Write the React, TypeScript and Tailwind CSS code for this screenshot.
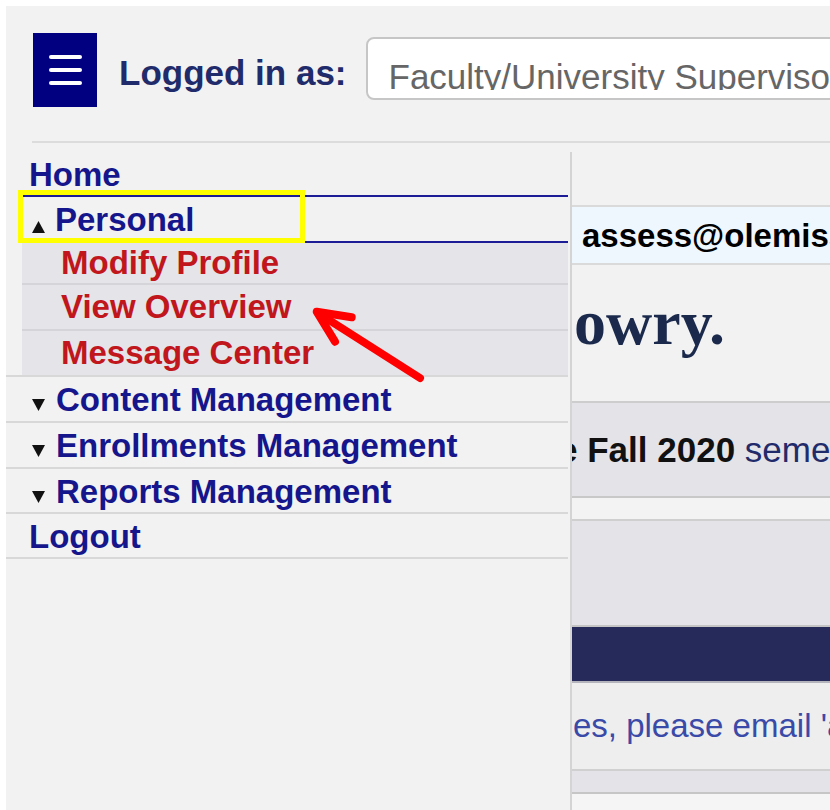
import React from "react";

function Caret({ up }: { up?: boolean }) {
  return (
    <svg width="13" height="12" viewBox="0 0 13 12" className="shrink-0">
      <polygon points={up ? "0,12 6.5,0 13,12" : "0,0 13,0 6.5,12"} fill="#111111" />
    </svg>
  );
}

const subItems = [
  { label: "Modify Profile", h: "h-[42px] border-b-2" },
  { label: "View Overview", h: "h-[46px] border-b-2" },
  { label: "Message Center", h: "h-[44px]" },
];

const groups = [
  { label: "Content Management", h: "h-[46px]" },
  { label: "Enrollments Management", h: "h-[46px]" },
  { label: "Reports Management", h: "h-[45px]" },
];

export default function App() {
  return (
    <div className="relative h-[810px] w-[830px] overflow-hidden bg-white font-['Liberation_Sans',Arial,sans-serif]">
      <div className="ml-[6px] mt-[6px] flex h-[804px] flex-col bg-[#f2f2f2]">
        {/* header */}
        <div className="flex items-start pl-[27px] pt-[27px]">
          <button className="flex h-[74px] w-[64px] shrink-0 flex-col items-center justify-center gap-[9px] bg-[#000080]">
            <span className="block h-[4px] w-[33px] rounded-full bg-white" />
            <span className="block h-[4px] w-[33px] rounded-full bg-white" />
            <span className="block h-[4px] w-[33px] rounded-full bg-white" />
          </button>
          <span className="ml-[22px] mt-[22px] whitespace-nowrap text-[35px] font-bold leading-none text-[#1f2b6b]">
            Logged in as:
          </span>
          <div className="ml-[19px] mt-[4px] h-[63px] w-[600px] shrink-0 rounded-[8px] border-2 border-[#c6c6c6] bg-white pl-[21px] pt-[20px]">
            <div className="h-[31px] overflow-hidden whitespace-nowrap text-[35px] leading-[35px] text-[#666666]">
              Faculty/University Supervisor
            </div>
          </div>
        </div>
        <div className="ml-[26px] mt-[34px] h-[2px] bg-[#dcdcdc]" />

        {/* body */}
        <div className="mt-[9px] flex min-h-0 flex-1">
          <aside className="relative w-[562px] shrink-0 text-[33px] font-bold">
            <div className="flex h-[43px] items-center pl-[23px] pt-[3px] text-[#16168c]">Home</div>
            <div className="ml-[12px] flex h-[48px] items-center border-y-2 border-l-2 border-[#1c1c96] pl-[12px] pt-[2px] text-[#16168c]">
              <span className="mt-[14px]">
                <Caret up />
              </span>
              <span className="ml-[10px]">Personal</span>
            </div>
            <div className="ml-[16px] bg-[#e4e4e9]">
              {subItems.map((s) => (
                <div
                  key={s.label}
                  className={`flex items-center border-[#d5d5d9] pl-[39px] text-[#c0161c] ${s.h}`}
                >
                  {s.label}
                </div>
              ))}
            </div>
            <div className="h-[2px] bg-[#d8d8d8]" />
            {groups.map((g) => (
              <div
                key={g.label}
                className={`flex items-center whitespace-nowrap border-b-2 border-[#d8d8d8] pl-[26px] pt-[2px] text-[#16168c] ${g.h}`}
              >
                <span className="mt-[10px]">
                  <Caret />
                </span>
                <span className="ml-[11px]">{g.label}</span>
              </div>
            ))}
            <div className="flex h-[45px] items-center border-b-2 border-[#d8d8d8] pl-[23px] pt-[2px] text-[#16168c]">
              Logout
            </div>

            {/* highlight around the Personal entry */}
            <div className="absolute left-[12px] top-[38px] h-[53px] w-[287px] border-[5px] border-[#ffff00]" />
          </aside>

          <main className="ml-[2px] flex min-w-0 flex-1 flex-col overflow-hidden border-l-2 border-[#d4d4d4]">
            <div className="h-[55px] shrink-0 border-b-2 border-[#dadada]" />
            <div className="flex h-[58px] shrink-0 items-center whitespace-nowrap border-b-2 border-[#dadada] bg-[#eef6fe] pl-[10px] pt-[2px] text-[33px] font-bold text-black">
              assess@olemiss.edu
            </div>
            <div className="h-[138px] shrink-0 whitespace-nowrap border-b-2 border-[#cdcdcd] pl-[2px] pt-[26px] font-['Liberation_Serif','Times_New_Roman',serif] text-[64px] font-bold leading-none text-[#1b2a4c]">
              owry.
            </div>
            <div className="flex h-[95px] shrink-0 items-center whitespace-nowrap border-b-2 border-[#c8c8c8] bg-[#e3e3e8] pt-[2px] text-[35px]">
              <span className="ml-[-47px] font-bold text-[#111111]">the Fall 2020</span>
              <span className="text-[#1f2b6b]">&nbsp;semester</span>
            </div>
            <div className="h-[23px] shrink-0 border-b-2 border-[#cfcfcf] bg-[#f3f3f3]" />
            <div className="h-[106px] shrink-0 border-b-2 border-[#c4c4c4] bg-[#e3e3e8]" />
            <div className="h-[56px] shrink-0 border-b-2 border-[#b4b4bc] bg-[#252a5a]" />
            <div className="flex h-[88px] shrink-0 items-center whitespace-nowrap border-b-2 border-[#d0d0d0] bg-[#eeeeee] pl-[1px] text-[33px] text-[#3a4aa8]">
              es, please email 'assess@olemiss.edu'
            </div>
            <div className="h-[23px] shrink-0 border-b-2 border-[#c6c6c6] bg-[#e3e3e8]" />
            <div className="flex-1 bg-[#f5f5f5]" />
          </main>
        </div>
      </div>

      {/* pointer arrow */}
      <svg
        className="pointer-events-none absolute left-[300px] top-[300px]"
        width="130"
        height="90"
        viewBox="0 0 130 90"
      >
        <g stroke="#ff0000" strokeWidth="8" strokeLinecap="round" strokeLinejoin="round" fill="none">
          <line x1="120" y1="78" x2="18" y2="13" />
          <polyline points="51.7,17.3 16.7,11.7 35,41.7" />
        </g>
      </svg>
    </div>
  );
}
